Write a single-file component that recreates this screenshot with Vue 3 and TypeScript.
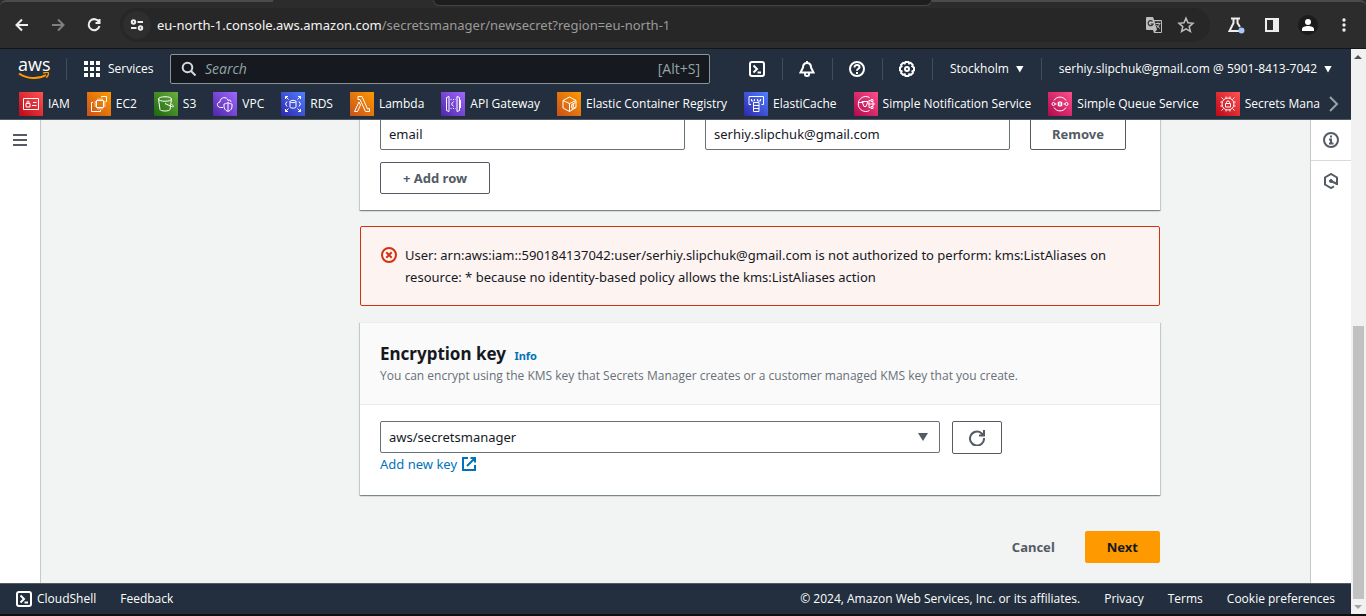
<script setup lang="ts">
import { ref } from 'vue'

interface Service {
  name: string
  tone: string
  paths: string[]
}

const services: Service[] = [
  {
    name: 'IAM',
    tone: 'red',
    paths: ['M4.5 6.5h15v11h-15z', 'M7 11.5h4v3.5H7z', 'M8 11.5V10a1 1 0 0 1 2 0v1.5', 'M14 10.5h3.5M13 13.5h4.500'],
  },
  {
    name: 'EC2',
    tone: 'orange',
    paths: ['M9.500 8.500h7v7h-7z', 'M11 8V6.500M13 8V6.500M15 8V6.500M11 16v1.500M13 16v1.500M15 16v1.500M9 10H7.500M9 12H7.500M9 14H7.500M17 10h1.500M17 12h1.500M17 14h1.500', 'M14.500 5.500v-1h5v5h-1M6 10.500H4.500v9h9V18'],
  },
  {
    name: 'S3',
    tone: 'green',
    paths: ['M4.500 7c0-3 13-3 13 0s-13 3-13 0l1.500 10.500c.5 2 9.500 2 10 0L17.500 7', 'M11 11.500l6.500 3c3 1 2.500-1 0-2'],
  },
  {
    name: 'VPC',
    tone: 'purple',
    paths: ['M10 15.500H7.500c-4 0-4-5.500-.5-5.500 0-5 7-6 8-1.500 1.500-1 3-.5 3 1.500', 'M15 10.500c2 1.500 3 1 4 1.500v3c0 3-4 4.500-4 4.500s-4-1.500-4-4.500v-3c1-.5 2 0 4-1.500zM15 10.500v9'],
  },
  {
    name: 'RDS',
    tone: 'blue',
    paths: ['M9 9.500c0-1.500 6-1.500 6 0s-6 1.500-6 0v5.500c0 1.500 6 1.500 6 0V9.500', 'M7.500 7.500l-3-3M4.500 7V4.500H7M16.500 7.500l3-3M17 4.500h2.500V7M7.500 16.500l-3 3M4.500 17v2.500H7M16.500 16.500l3 3M17 19.500h2.500V17', 'M6 9.500L4.500 12 6 14.500M18 9.500l1.500 2.500-1.500 2.500'],
  },
  {
    name: 'Lambda',
    tone: 'orange',
    paths: ['M8 4.500h4l5.500 12.500 2-.5v3h-4L10 7.500H8z', 'M9 10l1.500 3-3 6.500h-3z'],
  },
  {
    name: 'API Gateway',
    tone: 'purple',
    paths: ['M8 4.500v15l-2.500-1v-13zM5.500 8v8M16 4.500v15l2.500-1v-13zM19.500 8v8', 'M12.500 9.500L10.500 12l2 2.500', 'M9.500 7.500h1M12 7.500h1M14.500 7.500h.5M9.500 16.500h1M12 16.500h1M14.500 16.500h.5'],
  },
  {
    name: 'Elastic Container Registry',
    tone: 'orange',
    paths: ['M12.500 5l6.500 3.500v7L12.500 19.500 6 16V8.500zM6 8.500l6.500 3M19 8.500l-6.500 3v8', 'M14.500 12.500l4-2M14.500 15.500l2-1v-2l-2 1zM14.500 17l4-2'],
  },
  {
    name: 'ElastiCache',
    tone: 'blue',
    paths: ['M7 12.500H5v-8h14.500v8H17.500', 'M7.500 9V7M10.500 9V7M13.500 9V7M16.500 9V7M7.500 9h2M13.500 9h3', 'M9.500 10.500h5.500v9H9.500zM9.500 13.500H15M9.500 16.500H15'],
  },
  {
    name: 'Simple Notification Service',
    tone: 'pink',
    paths: ['M15.500 5.500a7.500 7.500 0 1 0 0 13', 'M4.500 10.500h5M8 9.500h6l-2 5h-2zM14 12h3M15 12V8.500h1.500M15 12v3.500h1.500', 'M17 7.500h2v2h-2zM18 11h2v2h-2zM17 14.500h2v2h-2z'],
  },
  {
    name: 'Simple Queue Service',
    tone: 'pink',
    paths: ['M6 8.500a7 7 0 0 1 12 0M6 15.500a7 7 0 0 0 12 0', 'M10.500 10h3v4h-3zM9.500 11h5M9.500 13h5', 'M4 12a1.500 1.500 0 1 0 3 0a1.500 1.500 0 1 0-3 0M17 12a1.500 1.500 0 1 0 3 0a1.500 1.500 0 1 0-3 0M7 12h1.500M15.500 12H17'],
  },
  {
    name: 'Secrets Manager',
    tone: 'red',
    paths: ['M12 6a6 6 0 1 0 0 12a6 6 0 1 0 0-12', 'M9.500 11.500h5v3.500h-5zM10.500 11.500V10.500a1.500 1.500 0 0 1 3 0v1', 'M10 6.500v-2M14 6.500v-2M10 17.500v2M14 17.500v2M6.500 10h-2M6.500 14h-2M17.500 10h2M17.500 14h2M7.500 7.500l-2-2M16.500 7.500l2-2M7.500 16.500l-2 2M16.500 16.500l2 2'],
  },
]

const secretKey = ref('email')
const secretValue = ref('serhiy.slipchuk@gmail.com')
const encryptionKey = ref('aws/secretsmanager')
const query = ref('')
</script>

<template>
  <div class="window">
    <div class="browser">
      <div class="strip"><span class="tab-left"></span><span class="tab-dark"></span><span class="tab-right"></span></div>
      <div class="toolbar">
        <button class="tool" aria-label="Back">
          <svg width="16" height="16" viewBox="0 0 16 16" class="line"><path d="M14 8H3M8 2.500L2.500 8 8 13.500" /></svg>
        </button>
        <button class="tool dim" aria-label="Forward">
          <svg width="16" height="16" viewBox="0 0 16 16" class="line"><path d="M2 8h11M8 2.500L13.500 8 8 13.500" /></svg>
        </button>
        <button class="tool" aria-label="Reload">
          <svg width="16" height="16" viewBox="0 0 16 16" class="line"><path d="M13 5A5.500 5.500 0 1 0 13.500 9M13.500 2v4H9.500" /></svg>
        </button>
        <div class="omnibox">
          <button class="site" aria-label="Site information">
            <svg width="14" height="14" viewBox="0 0 14 14" class="line"><circle cx="3.500" cy="4" r="1.700" /><path d="M7.500 4H13M1 10h5.500" /><circle cx="10.500" cy="10" r="1.700" /></svg>
          </button>
          <div class="url"><span>eu-north-1.console.aws.amazon.com</span>/secretsmanager/newsecret?region=eu-north-1</div>
          <button class="tool soft" aria-label="Translate this page">
            <svg width="18" height="18" viewBox="0 0 18 18"><path d="M2 1h6l1.200 3H16a1 1 0 0 1 1 1v11a1 1 0 0 1-1 1H9l-1-3H2a1 1 0 0 1-1-1V2a1 1 0 0 1 1-1z" fill="#bdbdbd" /><path d="M9.500 5.200H16V16H10l2-2.200z" fill="#282828" /><path d="M10.500 7.500h5M13 6.500v1M14.500 7.500c-.5 2-1.500 3.500-3 4.500M11.500 9c1 1.500 2 2.500 3.500 3.500" stroke="#bdbdbd" fill="none" /><path d="M7.500 5.500A2.500 2.500 0 1 0 8 8H5.700" stroke="#333" stroke-width="1.200" fill="none" /></svg>
          </button>
          <button class="tool soft" aria-label="Bookmark this tab">
            <svg width="18" height="18" viewBox="0 0 18 18" class="line star"><path d="M9 2.200l2 4.600 5 .5-3.800 3.300 1.200 4.900L9 12.900l-4.400 2.600 1.200-4.900L2 7.300l5-.5z" /></svg>
          </button>
        </div>
        <button class="tool" aria-label="Experiments">
          <svg width="20" height="20" viewBox="0 0 20 20" class="line"><path d="M5 3.500h9M7.500 3.500V8L3.500 16H13M11.500 3.500V8l2.500 4" /><circle cx="15.500" cy="15.500" r="3" fill="#a8c7fa" stroke="none" /></svg>
        </button>
        <button class="tool" aria-label="Side panel">
          <svg width="16" height="16" viewBox="0 0 16 16"><path d="M2 2h12v12H2z" fill="none" stroke="#eee" stroke-width="2" /><path d="M9 2h5v12H9z" fill="#eee" /></svg>
        </button>
        <button class="tool profile" aria-label="Profile">
          <svg width="14" height="14" viewBox="0 0 14 14" fill="#fff"><circle cx="7" cy="4" r="3" /><path d="M1 13v-2c0-4 12-4 12 0v2z" /></svg>
        </button>
        <button class="tool" aria-label="Browser menu">
          <svg width="16" height="16" viewBox="0 0 16 16" fill="#eee"><circle cx="8" cy="3" r="1.700" /><circle cx="8" cy="8" r="1.700" /><circle cx="8" cy="13" r="1.700" /></svg>
        </button>
      </div>
    </div>

    <div class="viewport">
      <div class="page">
        <header class="header">
          <nav class="topnav" aria-label="Global">
            <a class="logo" href="#" aria-label="AWS home">
              <span>aws</span>
              <svg width="32" height="8" viewBox="0 0 32 8"><path d="M1 1.500c8 5.500 19 6 27 1.500" fill="none" stroke="#f90" stroke-width="2" /><path d="M25 1.200c3-1 5-.9 5.300-.4.3.7-.4 3.200-2 5" fill="none" stroke="#f90" stroke-width="1.400" /></svg>
            </a>
            <span class="rule first"></span>
            <button class="services">
              <svg width="16" height="16" viewBox="0 0 16 16" fill="#fff"><path d="M0 0h4v4H0zM6 0h4v4H6zM12 0h4v4h-4zM0 6h4v4H0zM6 6h4v4H6zM12 6h4v4h-4zM0 12h4v4H0zM6 12h4v4H6zM12 12h4v4h-4z" /></svg>
              Services
            </button>
            <label class="search">
              <svg width="16" height="16" viewBox="0 0 16 16" fill="none" stroke="#d5dbdb" stroke-width="2"><circle cx="6.500" cy="6.500" r="4.800" /><path d="M10 10l4.500 4.500" /></svg>
              <input v-model="query" type="search" placeholder="Search" aria-label="Search" />
              <span>[Alt+S]</span>
            </label>
            <div class="actions">
              <button aria-label="CloudShell">
                <svg width="16" height="16" viewBox="0 0 16 16" class="line"><rect x="1" y="1" width="14" height="14" rx="2" /><path d="M4.500 4.500L8 8l-3.500 3.500M8.500 11.500H12" /></svg>
              </button>
              <button aria-label="Notifications">
                <svg width="16" height="16" viewBox="0 0 16 16" class="line"><path d="M8 0v2M8 2C5 2 4 4 4 6.500L1.500 11.500h13L12 6.500C12 4 11 2 8 2zM6 12v1.500c0 2 4 2 4 0V12" /></svg>
              </button>
              <button aria-label="Support">
                <svg width="16" height="16" viewBox="0 0 16 16" class="line"><circle cx="8" cy="8" r="7" /><path d="M5.500 6.500C5.500 3 10.500 3.500 10.500 6.200 10.500 8 8 7.500 8 9.800M8 11v2" /></svg>
              </button>
              <button aria-label="Settings">
                <svg width="16" height="16" viewBox="0 0 16 16" class="line"><path d="M6.500 1h3l.6 1.400 1.600-.6 2 2-.5 1.600L15 6.500v3l-1.600.8.5 1.600-2 2-1.600-.6-.8 1.700h-3l-.8-1.700-1.600.6-2-2 .5-1.600L1 9.500v-3l1.600-1.100-.5-1.600 2-2 1.600.6z" /><circle cx="8" cy="8" r="2" /></svg>
              </button>
              <button class="menu">Stockholm <i class="caret"></i></button>
              <button class="menu account">serhiy.slipchuk@gmail.com @ 5901-8413-7042 <i class="caret"></i></button>
            </div>
          </nav>
          <nav class="favorites" aria-label="Favorites">
            <div class="favlist">
              <a v-for="s in services" :key="s.name" href="#">
                <svg width="24" height="24" viewBox="0 0 24 24" :class="['tile', s.tone]"><path v-for="d in s.paths" :key="d" :d="d" /></svg>
                {{ s.name }}
              </a>
            </div>
            <button class="more" aria-label="Scroll favorites">
              <svg width="12" height="16" viewBox="0 0 12 16"><path d="M2 1l7 7-7 7" fill="none" stroke="#95a5a6" stroke-width="2" /></svg>
            </button>
          </nav>
        </header>

        <div class="body">
          <aside class="rail left">
            <button aria-label="Open navigation">
              <svg width="14" height="12" viewBox="0 0 14 12" fill="#545b64"><path d="M0 0h14v2H0zM0 5h14v2H0zM0 10h14v2H0z" /></svg>
            </button>
          </aside>

          <main class="main">
            <div class="column">
              <section class="card">
                <div class="pair">
                  <input v-model="secretKey" class="field" aria-label="Key" />
                  <input v-model="secretValue" class="field" aria-label="Value" />
                  <button class="btn remove">Remove</button>
                </div>
                <button class="btn add">+ Add row</button>
              </section>

              <div class="alert" role="alert">
                <svg width="16" height="16" viewBox="0 0 16 16" fill="none" stroke="#d13212" stroke-width="2"><circle cx="8" cy="8" r="7" /><path d="M5.300 5.300l5.400 5.400M10.700 5.300l-5.400 5.400" /></svg>
                <p>User: arn:aws:iam::590184137042:user/serhiy.slipchuk@gmail.com is not authorized to perform: kms:ListAliases on resource: * because no identity-based policy allows the kms:ListAliases action</p>
              </div>

              <section class="card key">
                <header class="cardhead">
                  <h2>Encryption key <a href="#">Info</a></h2>
                  <p>You can encrypt using the KMS key that Secrets Manager creates or a customer managed KMS key that you create.</p>
                </header>
                <div class="cardbody">
                  <div class="choose">
                    <div class="selectwrap">
                      <select v-model="encryptionKey" class="field" aria-label="Encryption key">
                        <option>aws/secretsmanager</option>
                      </select>
                      <i class="caret"></i>
                    </div>
                    <button class="btn refresh" aria-label="Refresh keys">
                      <svg width="16" height="16" viewBox="0 0 16 16" fill="none" stroke="#545b64" stroke-width="2"><path d="M15 8A7 7 0 1 1 12.500 3.200L15 5.500M15 0v5.500H10" /></svg>
                    </button>
                  </div>
                  <a class="addkey" href="#">Add new key
                    <svg width="14" height="14" viewBox="0 0 14 14" fill="none" stroke="#0073bb" stroke-width="2"><path d="M6 1H1v12h12V8M8.500 1H13v4.500M13 1L5 9" /></svg>
                  </a>
                </div>
              </section>

              <div class="submit">
                <button class="btn plain">Cancel</button>
                <button class="btn primary">Next</button>
              </div>
            </div>
          </main>

          <aside class="rail right">
            <button aria-label="Info panel">
              <svg width="16" height="16" viewBox="0 0 16 16" fill="none" stroke="#545b64" stroke-width="2"><circle cx="8" cy="8" r="7" /><path d="M7 4.500h2M6 7.500h2V11M6 11.500h4.500" /></svg>
            </button>
            <button aria-label="Resources panel">
              <svg width="16" height="16" viewBox="0 0 16 16" fill="none" stroke="#545b64" stroke-width="2"><path d="M11 13.300L8 15l-6-3.500v-7L8 1l6 3.500V12" /><circle cx="8" cy="8" r="1.500" fill="#545b64" stroke-width="1" /><path d="M8 8l6 3" /></svg>
            </button>
          </aside>
        </div>

        <footer class="footer">
          <a href="#" class="shell">
            <svg width="16" height="16" viewBox="0 0 16 16" class="line"><rect x="1" y="1" width="14" height="14" rx="2" /><path d="M4.500 4.500L8 8l-3.500 3.500M8.500 11.500H12" /></svg>
            CloudShell
          </a>
          <a href="#">Feedback</a>
          <span class="copyright">© 2024, Amazon Web Services, Inc. or its affiliates.</span>
          <a href="#">Privacy</a>
          <a href="#">Terms</a>
          <a href="#">Cookie preferences</a>
        </footer>
      </div>
      <div class="scrollbar">
        <i class="arrow up"></i>
        <div class="track"><div class="thumb"></div></div>
        <i class="arrow down"></i>
      </div>
    </div>
  </div>
</template>

<style>
body {
  margin: 0;
  background: #0f0f10;
}
</style>

<style scoped>
* {
  box-sizing: border-box;
}
.window {
  height: 100vh;
  display: flex;
  flex-direction: column;
  padding-bottom: 2px;
  background: #0f0f10;
  font: 13px/22px "Noto Sans", "Open Sans", sans-serif;
  color: #16191f;
  overflow: hidden;
}
button {
  border: 0;
  padding: 0;
  background: none;
  color: inherit;
  font: inherit;
  display: flex;
  align-items: center;
  justify-content: center;
}
a {
  color: inherit;
  text-decoration: none;
}
svg {
  display: block;
  flex: none;
}
.line {
  fill: none;
  stroke: currentColor;
  stroke-width: 2;
}

/* Browser chrome */
.browser {
  flex: none;
  height: 49px;
  background: #2c2c2c;
  border-bottom: 1px solid #151515;
  display: flex;
  flex-direction: column;
  color: #eee;
}
.strip {
  height: 6px;
  display: flex;
  background: #2c2c2c;
}
.tab-left {
  width: 273px;
  margin-right: 160px;
  border-top: 2px solid #4b4b4b;
  border-top-left-radius: 6px;
}
.tab-dark {
  width: 499px;
  background: #1e1e1e;
  border: 1px solid #454545;
  border-top: 0;
  border-radius: 0 0 6px 6px;
}
.tab-right {
  flex: 1;
  height: 6px;
  border-top: 2px solid #4b4b4b;
  border-top-right-radius: 6px;
}
.toolbar {
  height: 38px;
  display: flex;
  align-items: center;
  padding-left: 14px;
  padding-right: 14px;
  gap: 20px;
}
.tool {
  width: 16px;
  height: 28px;
  flex: none;
}
.dim {
  color: #808080;
}
.omnibox {
  flex: 1;
  height: 34px;
  border-radius: 17px;
  background: #272727;
  display: flex;
  align-items: center;
  gap: 16px;
  padding: 0 16px 0 3px;
  margin: 0 -2px;
}
.site {
  width: 28px;
  height: 28px;
  border-radius: 14px;
  background: #2e2e2e;
  margin-right: -10px;
}
.url {
  flex: 1;
  color: #9a9a9a;
  white-space: nowrap;
  overflow: hidden;
}
.url span {
  color: #f4f4f4;
}
.soft {
  color: #bdbdbd;
}
.star {
  stroke-width: 1.5;
}
.profile {
  border-radius: 10px;
  height: 20px;
  width: 20px;
  margin: 0 -2px;
  background: #1c1c1c;
}

/* Console frame */
.viewport {
  flex: 1;
  min-height: 0;
  display: flex;
}
.page {
  flex: 1;
  min-width: 0;
  display: flex;
  flex-direction: column;
}
.header {
  flex: none;
  background: #232f3e;
  color: #fff;
  border-bottom: 1px solid #545b64;
  font: 12px/16px "Open Sans", "Noto Sans", sans-serif;
}
.topnav {
  height: 40px;
  display: flex;
  align-items: center;
  padding-left: 18px;
}
.logo {
  width: 32px;
  height: 24px;
  display: flex;
  flex-direction: column;
}
.logo span {
  font-size: 18px;
  font-weight: 500;
  line-height: 15px;
}
.rule {
  width: 1px;
  height: 22px;
  background: #414d5c;
}
.first {
  margin: 0 17px 0 16px;
}
.services {
  width: 70px;
  justify-content: flex-start;
  gap: 8px;
}
.search {
  flex: 0 1 540px;
  margin-left: 16px;
  height: 30px;
  border: 1px solid #879596;
  border-radius: 2px;
  background: #16191f;
  display: flex;
  align-items: center;
  gap: 8px;
  padding: 0 9px 0 10px;
  color: #95a5a6;
  font-size: 14px;
}
.search input {
  flex: 1;
  min-width: 0;
  border: 0;
  padding: 0;
  background: none;
  font: inherit;
  color: #fff;
  outline: 0;
}
.search input::placeholder {
  font-style: italic;
  color: #95a5a6;
  opacity: 1;
}
.actions {
  margin-left: auto;
  display: flex;
}
.actions button {
  width: 50px;
  height: 22px;
  border-right: 1px solid #414d5c;
}
.actions .menu {
  width: auto;
  padding: 0 17px;
  gap: 7px;
  white-space: nowrap;
}
.actions .account {
  border: 0;
  padding-right: 19px;
}
.caret {
  width: 8px;
  height: 7px;
  background: currentColor;
  clip-path: polygon(0 0, 100% 0, 50% 100%);
}
.favorites {
  height: 30px;
  padding: 3px 11px 3px 19px;
  display: flex;
  justify-content: space-between;
}
.favlist {
  flex: 0 1 1301px;
  display: flex;
  gap: 17px;
  overflow: hidden;
}
.favlist a {
  display: flex;
  align-items: center;
  gap: 5px;
  white-space: nowrap;
}
.tile {
  fill: none;
  stroke: #fff;
  stroke-width: 1;
}
.red {
  background: linear-gradient(45deg, #bd0816, #ff5252);
}
.orange {
  background: linear-gradient(45deg, #c8511b, #f90);
}
.green {
  background: linear-gradient(45deg, #1b660f, #6cae3e);
}
.purple {
  background: linear-gradient(45deg, #4d27a8, #a166ff);
}
.blue {
  background: linear-gradient(45deg, #2e27ad, #527fff);
}
.pink {
  background: linear-gradient(45deg, #b0084d, #ff4f8b);
}

/* Content */
.body {
  flex: 1;
  min-height: 0;
  display: flex;
}
.rail {
  flex: none;
  width: 41px;
  background: #fff;
}
.rail button {
  width: 40px;
  height: 40px;
}
.left {
  border-right: 1px solid #c4cacb;
}
.right {
  border-left: 1px solid #c4cacb;
}
.right button:first-child {
  height: 41px;
  border-bottom: 1px solid #d5dbdb;
}
.main {
  flex: 1;
  min-width: 0;
  overflow: hidden;
  background: #f2f3f3;
  display: grid;
  grid-template-columns: 279px minmax(0, 800px);
  align-items: end;
  align-content: end;
  padding: 0 40px 20px;
}
.column {
  grid-column: 2;
}
.card {
  background: #fff;
  padding: 20px 20px 16px;
  box-shadow: 0 1px 1px 0 rgba(0, 28, 36, 0.3), 1px 1px 1px 0 rgba(0, 28, 36, 0.15), -1px 1px 1px 0 rgba(0, 28, 36, 0.15);
  border-top: 1px solid #eaeded;
}
.pair {
  display: grid;
  grid-template-columns: 305px 305px 96px;
  gap: 20px;
  margin-bottom: 12px;
}
.field {
  width: 100%;
  height: 32px;
  border: 1px solid #687078;
  border-radius: 2px;
  background: #fff;
  padding: 0 8px;
  font: inherit;
  color: #16191f;
  appearance: none;
}
.btn {
  height: 32px;
  border: 1px solid #545b64;
  border-radius: 2px;
  background: #fff;
  color: #545b64;
  font-weight: 700;
  padding: 0 21px;
}
.remove {
  padding: 0;
}
.add {
  padding: 0 22px;
}
.alert {
  margin: 16px 0;
  border: 1px solid #d13212;
  border-radius: 2px;
  background: #fdf3f1;
  padding: 17px 20px;
  display: flex;
  gap: 8px;
}
.alert svg {
  margin-top: 3px;
}
.alert p {
  margin: 0;
}
.key {
  padding: 0;
}
.cardhead {
  background: #fafafa;
  border-bottom: 1px solid #eaeded;
  padding: 19px 20px 18px;
}
.cardhead h2 {
  margin: 0;
  font-size: 17px;
  font-weight: 700;
  line-height: 24px;
}
.cardhead h2 a {
  margin-left: 4px;
  font-size: 11px;
  line-height: 12px;
  color: #0073bb;
}
.cardhead p {
  margin: 0;
  font: 12px/20px "Open Sans", "Noto Sans", sans-serif;
  color: #687078;
}
.cardbody {
  padding: 16px 20px 21px;
}
.choose {
  display: flex;
  gap: 12px;
}
.selectwrap {
  position: relative;
  flex: 0 1 560px;
}
.selectwrap .caret {
  position: absolute;
  right: 12px;
  top: 12px;
  width: 10px;
  height: 8px;
  background: #545b64;
  pointer-events: none;
}
.refresh {
  width: 50px;
  height: 33px;
  padding: 0;
}
.addkey {
  display: flex;
  width: fit-content;
  align-items: center;
  gap: 5px;
  line-height: 20px;
  color: #0073bb;
}
.submit {
  margin-top: 36px;
  display: flex;
  justify-content: flex-end;
  gap: 8px;
}
.plain {
  border-color: transparent;
  background: none;
}
.primary {
  background: #f90;
  border-color: #f90;
  color: #16191f;
}
.footer {
  flex: none;
  height: 31px;
  border-top: 1px solid #545b64;
  background: #232f3e;
  color: #fff;
  font: 12px/22px "Open Sans", "Noto Sans", sans-serif;
  display: flex;
  align-items: center;
  gap: 24px;
  padding: 0 16px;
  white-space: nowrap;
}
.shell {
  display: flex;
  align-items: center;
  gap: 5px;
}
.copyright {
  margin-left: auto;
}

/* Scrollbar */
.scrollbar {
  flex: none;
  width: 15px;
  background: #f1f1f1;
  display: flex;
  flex-direction: column;
}
.track {
  flex: 1;
  display: flex;
  align-items: flex-end;
  padding: 0 2px;
}
.thumb {
  width: 100%;
  height: 51%;
  background: #c1c1c1;
}
.arrow {
  width: 8px;
  height: 4px;
  margin: 6px 3px 5px;
}
.up {
  background: #505050;
  clip-path: polygon(50% 0, 100% 100%, 0 100%);
}
.down {
  background: #a3a3a3;
  clip-path: polygon(0 0, 100% 0, 50% 100%);
}
</style>
